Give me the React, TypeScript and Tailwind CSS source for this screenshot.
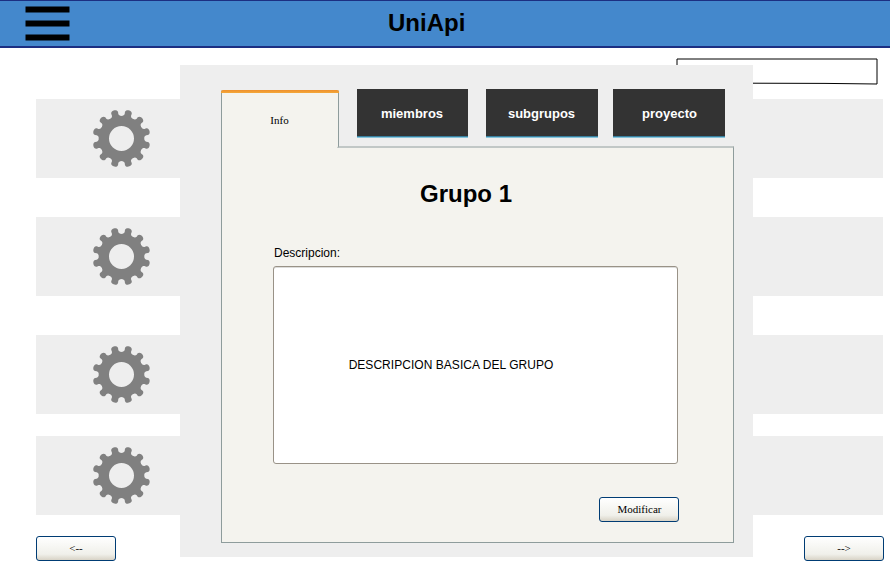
import React from "react";

const TEETH = [15, 45, 75, 105, 135, 165, 195, 225, 255, 285, 315, 345];

function Gear() {
  return (
    <svg className="block h-[61px] w-[61px]" viewBox="-30.5 -30.5 61 61" fill="#808080">
      <circle r="17.55" fill="none" stroke="#808080" strokeWidth="10.1" />
      {TEETH.map((a) => (
        <path
          key={a}
          transform={`rotate(${a})`}
          d="M-6 -21.8C-4.2 -22.5 -3.3 -23.4 -3.3 -24.8L-3.5 -26.4C-3.5 -29.9 3.5 -29.9 3.5 -26.4L3.3 -24.8C3.3 -23.4 4.2 -22.5 6 -21.8L4 -18L-4 -18Z"
        />
      ))}
    </svg>
  );
}

function Row({ className = "" }: { className?: string }) {
  return (
    <div className={`flex h-[79px] shrink-0 bg-[#eeeeee] pt-[9px] pl-[55px] ${className}`}>
      <Gear />
    </div>
  );
}

function Button({ children }: { children: React.ReactNode }) {
  return (
    <button className="flex h-[25px] w-20 items-center justify-center rounded-[3px] border border-[#003c74] bg-linear-to-b from-white via-[#f0f0ea] via-75% to-[#d8d3c6] text-[11px] leading-none text-black font-['Liberation_Serif',serif]">
      {children}
    </button>
  );
}

function DarkTab({ className, children }: { className: string; children: React.ReactNode }) {
  return (
    <div className={`flex h-[49px] shrink-0 flex-col bg-[#333333] text-[13px] font-bold text-white ${className}`}>
      <div className="flex flex-1 items-center justify-center pt-[2px]">{children}</div>
      <div className="h-px bg-[#39809f]" />
      <div className="h-px bg-[#86c5dc]" />
    </div>
  );
}

function Dialog() {
  return (
    <div className="absolute top-[65px] left-[180px] h-[492px] w-[573px] bg-[#eeeeee] pt-6 pl-[41px]">
      <div className="relative z-10 flex h-[57px] items-start">
        <div className="mt-px h-[58px] w-[118px] shrink-0 rounded-t-[2px] rounded-br-[2px] border-x border-[#8e9c9c] bg-[#f4f3ee]">
          <div className="-mx-px h-[3px] rounded-t-[2px] bg-linear-to-b from-[#ee8f2c] to-[#f3a83a]" />
          <div className="pt-[21px] pr-px text-center text-[11px] leading-[13px] font-['Liberation_Serif',serif]">Info</div>
        </div>
        <DarkTab className="ml-[18px] w-[111px]">
          <span className="pr-px">miembros</span>
        </DarkTab>
        <DarkTab className="ml-[18px] w-[112px]">
          <span className="pr-px">subgrupos</span>
        </DarkTab>
        <DarkTab className="ml-[15px] w-[112px]">
          <span className="pl-px">proyecto</span>
        </DarkTab>
      </div>
      <div className="flex h-[397px] w-[513px] flex-col border-x border-t-2 border-b border-x-[#8e9c9c] border-t-[#c1c7c6] border-b-[#8e9c9c] bg-[#f4f3ee]">
        <h2 className="mt-[32px] pr-[23px] text-center text-[24px] leading-[28px] font-bold">Grupo 1</h2>
        <div className="mt-[38px] ml-[52px] h-[20px] text-[12px] leading-[14px]">Descripcion:</div>
        <div className="ml-[51px] flex h-[198px] w-[405px] items-center justify-center rounded-[3px] border border-[#999287] bg-white pr-[49px] text-[12px] leading-[14px] tracking-[0.04px] shadow-[inset_0_1px_0_#dddddb]">
          DESCRIPCION BASICA DEL GRUPO
        </div>
        <div className="mt-[33px] ml-[377px]">
          <Button>
            <span className="pl-px">Modificar</span>
          </Button>
        </div>
      </div>
    </div>
  );
}

export default function App() {
  return (
    <div className="relative flex h-[584px] w-[890px] flex-col overflow-hidden bg-white text-black font-['Liberation_Sans',sans-serif]">
      <header className="flex h-12 shrink-0 border-t border-b-2 border-[#1c2f82] bg-[#4488cc]">
        <svg className="mt-[5px] ml-[25px] h-[36px] w-[46px] shrink-0" viewBox="0 0 46 36">
          <path d="M.5 .5h44v6H.5zM.5 14.5h44v6H.5zM.5 28.5h44v6H.5z" />
        </svg>
        <h1 className="mt-[8px] ml-[317px] text-[24px] leading-[28px] font-bold">UniApi</h1>
      </header>
      <div className="flex h-[51px] shrink-0 justify-end pt-[9px] pr-[11px]">
        <svg className="h-[29px] w-[204px]" viewBox="0 0 204 29" fill="none" stroke="#000">
          <path d="M2 2H202V27L150 26.4L2 26Z" />
        </svg>
      </div>
      <main className="flex flex-col pr-[7px] pl-9">
        <Row />
        <Row className="mt-[39px]" />
        <Row className="mt-[39px]" />
        <Row className="mt-[22px]" />
      </main>
      <footer className="mt-[21px] flex justify-between pr-[6px] pl-9">
        <Button>&lt;--</Button>
        <Button>--&gt;</Button>
      </footer>
      <Dialog />
    </div>
  );
}
